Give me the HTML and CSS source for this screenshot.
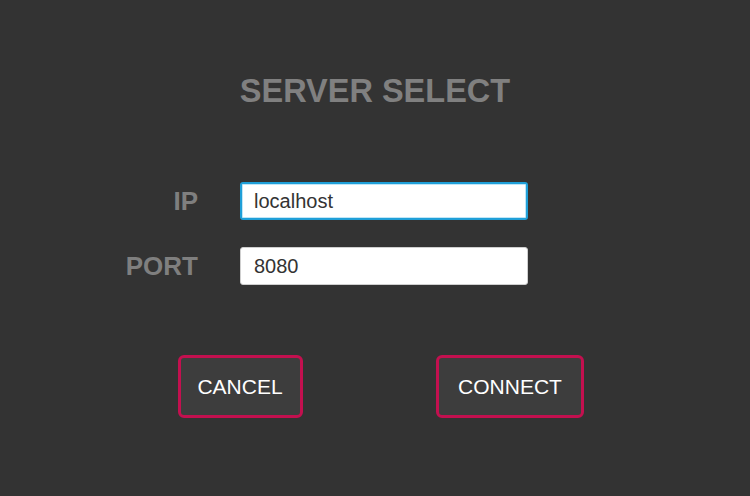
FILE: index.html
```html
<!DOCTYPE html>
<html lang="en">
<head>
<meta charset="utf-8">
<title>Server Select</title>
<link rel="stylesheet" href="styles.css">
</head>
<body>
<main class="dialog">
  <h1 class="title">SERVER SELECT</h1>
  <form class="form">
    <label class="label" for="ip">IP</label>
    <input class="field field-focus" id="ip" type="text" value="localhost">
    <label class="label" for="port">PORT</label>
    <input class="field" id="port" type="text" value="8080">
  </form>
  <div class="actions">
    <div class="cell"><button class="btn btn-cancel" type="button">CANCEL</button></div>
    <div class="cell"><button class="btn btn-connect" type="button">CONNECT</button></div>
  </div>
</main>
</body>
</html>
```

FILE: styles.css
```css
html, body {
  margin: 0;
  padding: 0;
  height: 100%;
  background: #333333;
}
body {
  font-family: "Liberation Sans", Arial, sans-serif;
}
.dialog {
  width: 750px;
  height: 496px;
  box-sizing: border-box;
  padding-top: 73px;
  display: flex;
  flex-direction: column;
  align-items: center;
}
.title {
  margin: 0;
  font-size: 32.5px;
  line-height: 37px;
  font-weight: bold;
  color: #808080;
  text-align: center;
}
.form {
  margin-top: 72px;
  display: grid;
  grid-template-columns: 90px 288px;
  column-gap: 42px;
  row-gap: 27px;
  align-items: center;
  margin-left: -114px;
  width: 420px;
}
.label {
  text-align: right;
  font-size: 26px;
  font-weight: bold;
  color: #7f7f7f;
}
.field {
  box-sizing: border-box;
  width: 288px;
  height: 38px;
  margin: 0;
  padding: 0 0 0 13px;
  border: 1px solid #cfcfcf;
  border-radius: 3px;
  background: #ffffff;
  font-family: "Liberation Sans", Arial, sans-serif;
  font-size: 20px;
  color: #333333;
  outline: none;
}
.field-focus {
  border: 2px solid #1f9fd8;
  box-shadow: inset 0 0 0 1px #bfe6f7;
  padding-left: 12px;
}
.actions {
  margin-top: 70px;
  width: 540px;
  display: grid;
  grid-template-columns: 1fr 1fr;
}
.cell {
  display: flex;
  justify-content: center;
}
.btn {
  box-sizing: border-box;
  height: 63px;
  padding: 0;
  border: 3px solid #c3104f;
  border-radius: 6px;
  background: #3d3d3d;
  color: #ffffff;
  font-family: "Liberation Sans", Arial, sans-serif;
  font-size: 21px;
  cursor: pointer;
}
.btn-cancel {
  width: 125px;
}
.btn-connect {
  width: 148px;
}
```
